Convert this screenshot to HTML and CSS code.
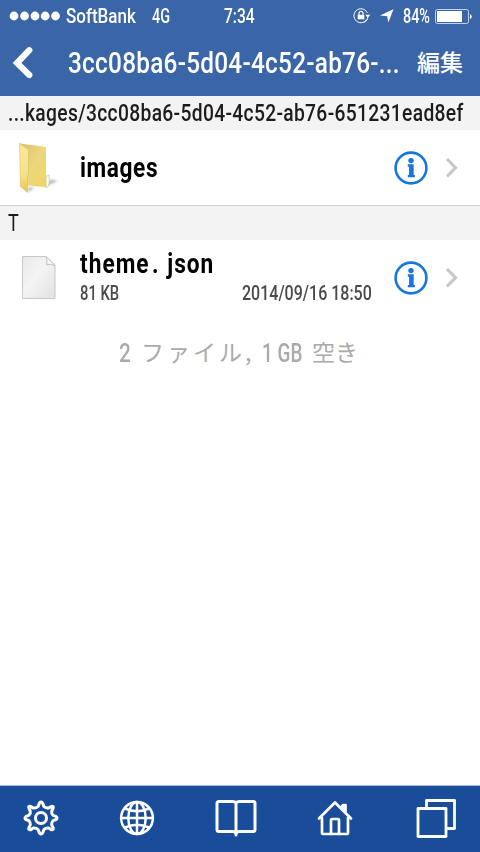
FILE: index.html
```html
<!DOCTYPE html>
<html lang="ja">
<head>
<meta charset="utf-8">
<meta name="viewport" content="width=device-width, initial-scale=1">
<title>ファイル</title>
<link rel="stylesheet" href="styles.css">
</head>
<body>
<div class="app">
  <header class="header">
    <div class="status">
      <div class="carrier">
        <svg class="signal" width="52" height="10" viewBox="0 0 52 10" fill="#fff"><circle cx="5" cy="5" r="4.4"/><circle cx="15.5" cy="5" r="4.4"/><circle cx="26" cy="5" r="4.4"/><circle cx="36.2" cy="5" r="4.4"/><circle cx="46.5" cy="5" r="4.4"/></svg>
        <span class="t carrier-name">SoftBank</span>
        <span class="t network">4G</span>
      </div>
      <span class="t clock">7:34</span>
      <div class="indicators">
        <svg class="lock" width="18" height="16" viewBox="0 0 18 16" fill="none" stroke="#fff"><path d="M14.9 8.5A7 7 0 1 1 14.3 4.8M14.2 11.4A7 7 0 0 1 11 14.3"/><path d="M12.3 6.8h5l-2.5 3z" fill="#fff" stroke="none"/><path d="M6 7V5.3a2 2 0 0 1 4 0V7" stroke-width="1.2"/><path d="M4.7 6.8h6.6v4.5H4.7z" fill="#fff" stroke="none"/></svg>
        <svg class="arrow" width="14" height="14" viewBox="0 0 14 14" fill="#fff"><path d="M13.5.3 8.3 13.6 7.2 7.2 0 6.5z"/></svg>
        <span class="t percent">84%</span>
        <svg class="battery" width="37" height="15" viewBox="0 0 37 15"><rect x=".5" y=".5" width="33" height="14" rx="2" fill="none" stroke="#c4d3eb"/><path d="M2 2h25v11H2z" fill="#fff"/><path d="M35 5q1.7.5 1.7 2.5T35 10z" fill="#fff"/></svg>
      </div>
    </div>
    <div class="nav">
      <svg class="back" width="22" height="34" viewBox="0 0 22 34" fill="none" stroke="#fff" stroke-width="6.2"><path d="M17.300 4.200 5 17l12.300 12" stroke-linecap="round"/></svg>
      <h1 class="t title">3cc08ba6-5d04-4c52-ab76-...</h1>
      <span class="edit">編集</span>
    </div>
  </header>

  <main class="files">
    <div class="section"><span class="t path">...kages/3cc08ba6-5d04-4c52-ab76-651231ead8ef</span></div>
    <div class="row row-folder">
      <svg class="thumb" width="64" height="60" viewBox="0 0 64 60">
        <defs>
          <linearGradient id="fb" x1="0" y1="0" x2="1" y2="1"><stop offset="0" stop-color="#d9c06a"/><stop offset=".5" stop-color="#edd77e"/><stop offset="1" stop-color="#f0d562"/></linearGradient>
          <linearGradient id="ff" x1="0" y1="0" x2="0" y2="1"><stop offset="0" stop-color="#f7e89f"/><stop offset=".65" stop-color="#f6e285"/><stop offset="1" stop-color="#e7c348"/></linearGradient>
          <filter id="soft" x="-30%" y="-50%" width="160%" height="200%"><feGaussianBlur stdDeviation="1.200"/></filter>
        </defs>
        <path d="M44 49 57 43.500 54 41.500 44 43z M28 54l7-4.500h-7z" fill="#b9bdc2" filter="url(#soft)"/>
        <path d="M20 5.500 46 9V49.300L28 47.500z" fill="url(#fb)"/>
        <path d="M46 38.500 49.200 37V45l-1.300 4L46 49.500z" fill="#fcfcf5" stroke="#d4c984" stroke-width=".7"/>
        <path d="M19.500 5.500 28.500 11.500V36.500l-1 1V54.500L20.500 48.500z" fill="url(#ff)" stroke="#d8bf61" stroke-width=".6"/>
      </svg>
      <div class="meta"><span class="t name">images</span></div>
      <svg class="info" width="34" height="34" viewBox="0 0 34 34" fill="#1676e0"><circle cx="17" cy="17" r="15.4" fill="none" stroke="#1676e0" stroke-width="2.6"/><circle cx="17" cy="9.6" r="2.7"/><path d="M13.8 13.3h5.9v10.700h1.2v2.300h-7.1v-2.300h1.300v-8.300h-1.300z"/></svg>
      <svg class="chevron" width="14" height="22" viewBox="0 0 14 22" fill="none" stroke="#c7c7cc" stroke-width="3.2"><path d="m2 2 8.5 8.7L2 19.5"/></svg>
    </div>
    <div class="section section-letter"><span class="t letter">T</span></div>
    <div class="row row-file">
      <svg class="thumb" width="64" height="60" viewBox="0 0 64 60">
        <defs><linearGradient id="pg" x1="0" y1="0" x2="1" y2="1"><stop offset="0" stop-color="#e9e9e9"/><stop offset=".45" stop-color="#f4f4f4"/><stop offset="1" stop-color="#e1e1e1"/></linearGradient></defs>
        <path d="M22.5 8.5H46l9 9V50.500H22.500z" fill="url(#pg)" stroke="#c8c8c8"/>
        <path d="M46 8.500q2 4.500.5 8.300Q50 15.500 55 17.500z" fill="#fafafa" stroke="#bbb" stroke-width=".9"/>
      </svg>
      <div class="meta">
        <span class="t name name-json">theme<span class="dot">.</span>json</span>
        <div class="details"><span class="t size">81 KB</span><span class="t date">2014/09/16 18:50</span></div>
      </div>
      <svg class="info" width="34" height="34" viewBox="0 0 34 34" fill="#1676e0"><circle cx="17" cy="17" r="15.4" fill="none" stroke="#1676e0" stroke-width="2.6"/><circle cx="17" cy="9.6" r="2.7"/><path d="M13.8 13.3h5.9v10.700h1.2v2.300h-7.1v-2.300h1.300v-8.300h-1.300z"/></svg>
      <svg class="chevron" width="14" height="22" viewBox="0 0 14 22" fill="none" stroke="#c7c7cc" stroke-width="3.2"><path d="m2 2 8.5 8.7L2 19.5"/></svg>
    </div>
    <p class="summary"><span class="t count">2</span><span class="jp files-label">ファイル,</span><span class="t free">1 GB</span><span class="jp free-label">空き</span></p>
  </main>

  <footer class="toolbar">
    <svg width="36" height="36" viewBox="0 0 36 36" fill="none" stroke="#fff" stroke-width="3" stroke-linejoin="round"><path d="M15 6.500C16 5.500 15.700 2 18 2s2 3.500 3 4.500 3 1.800 4.500 1.500 3.200-2.500 4.500-1.500-1 3.200-1.300 4.800.3 3 1.300 3.900S34 15.700 34 18s-3 1.700-4 2.800-1.600 2.300-1.300 3.900 2.600 3.500 1.300 4.800-3-1.200-4.500-1.500-3.500.5-4.500 1.500S20.300 34 18 34s-2-3.500-3-4.500-3-1.800-4.500-1.500-3.200 2.800-4.500 1.500 1-3.200 1.300-4.800-.3-2.800-1.300-3.900S2 20.300 2 18s3-1.900 4-2.800 1.600-2.300 1.300-3.900S4.700 7.500 6 6.500s3 1.200 4.500 1.500S14 7.500 15 6.500z"/><circle cx="18" cy="18" r="5.500"/></svg>
    <svg width="36" height="36" viewBox="0 0 36 36" fill="none" stroke="#fff" stroke-width="2.500"><circle cx="18" cy="18" r="15.900"/><path d="M18 2v32M2 18h32M6 8.500Q18 14 30 8.500M6 27.500Q18 22 30 27.500"/><ellipse cx="18" cy="18" rx="8.700" ry="16"/></svg>
    <svg class="book" width="42" height="38" viewBox="0 0 42 38" fill="none" stroke="#fff" stroke-width="3" stroke-linejoin="round" stroke-linecap="round"><path d="M21 4Q20 2.500 17.500 2.500H4Q2 2.500 2 4.500V30.500Q2 32.500 4 32.500H17.500Q20 32.500 21 34.500 22 32.500 24.500 32.500H38Q40 32.500 40 30.500V4.500Q40 2.500 38 2.500H24.500Q22 2.500 21 4V36"/></svg>
    <svg width="36" height="36" viewBox="0 0 36 36" fill="none" stroke="#fff" stroke-width="2.700" stroke-linejoin="round" stroke-linecap="round"><path d="M5 18v14.500q0 1.500 1.500 1.500h23q1.500 0 1.500-1.500V18M2 18.500 18 2.500l16 16"/><path d="M25 6.500 26 5h2.500v6.500z" fill="#fff"/><path d="M14 33.500V20q0-1 1-1h6q1 0 1 1v13.500"/></svg>
    <svg class="tabs" width="40" height="40" viewBox="0 0 40 40" fill="none" stroke="#fff" stroke-width="2.800" stroke-linejoin="round"><path d="M10.500 9V2.500h28v28h-7.500"/><path d="M2 10.500h28v28H2z"/></svg>
  </footer>
</div>
</body>
</html>
```
FILE: styles.css
```css
* { box-sizing: border-box; }
body { margin: 0; background: #fff; font-family: "Roboto", "Noto Sans CJK JP", sans-serif; }
.app { display: flex; flex-direction: column; width: 480px; height: 852px; overflow: hidden; background: #fff; }
.t { display: block; flex: none; white-space: pre; transform-origin: left center; }

.header { flex: none; height: 96px; background: #3a66a8; color: #fff; }
.status { display: grid; grid-template-columns: 224px 129px 1fr; align-items: center; height: 32px; }
.carrier { display: flex; align-items: center; padding-left: 9px; }
.carrier-name { width: 86px; margin-left: 5px; font-size: 20px; font-weight: 500; transform: scaleX(.85); }
.network { font-size: 20px; font-weight: 500; transform: scaleX(.72); }
.clock { font-size: 20px; font-weight: 500; transform: scaleX(.78); }
.indicators { display: flex; align-items: center; }
.arrow { margin-left: 9px; }
.percent { width: 31px; margin-left: 9px; font-size: 20px; font-weight: 500; transform: scaleX(.72); }
.battery { margin-left: 1px; }
.nav { display: flex; align-items: center; height: 62px; padding-left: 12px; }
.title { width: 349px; margin: 0 0 0 34px; font-size: 29px; font-weight: 500; letter-spacing: .3px; transform: scaleX(.84); }
.edit { font: 500 23px/32px "Noto Sans CJK JP", sans-serif; white-space: nowrap; margin-top: -5px; }

.section { display: flex; align-items: center; height: 34px; padding-left: 8px; background: #f3f3f3; color: #1c1c1c; }
.path { font-size: 24px; font-weight: 500; letter-spacing: .4px; transform: scaleX(.802); }
.row { display: flex; align-items: center; height: 75px; background: #fff; }
.row-folder { height: 76px; border-bottom: 1px solid #d0d0d0; }
.letter { font-size: 24px; transform: scaleX(.75); }
.thumb { flex: none; margin-right: 16px; }
.meta { width: 314px; color: #000; }
.name { font-size: 27px; line-height: 32px; font-weight: 700; letter-spacing: .7px; transform: scaleX(.84); }
.name-json { letter-spacing: 1.200px; }
.dot { margin: 0 9px 0 3px; }
.details { display: flex; color: #4a4a4a; }
.size { width: 162px; font-size: 20px; line-height: 27px; font-weight: 500; transform: scaleX(.74); }
.date { font-size: 20px; line-height: 27px; font-weight: 500; transform: scaleX(.8); }
.info { flex: none; }
.chevron { flex: none; margin-left: 17px; }
.summary { display: flex; align-items: center; height: 76px; margin: 0; padding-left: 119px; color: #aaa; }
.count { width: 22px; font-size: 26px; font-weight: 500; transform: scaleX(.8); }
.jp { font: 400 23px/32px "Noto Sans CJK JP", sans-serif; white-space: nowrap; margin-top: -4px; }
.files-label { width: 121px; letter-spacing: 3px; }
.free { width: 50px; font-size: 25px; font-weight: 500; transform: scaleX(.76); }

.toolbar { display: grid; grid-template-columns: 81px 112px 85px 114px 88px; align-items: center; justify-items: center; height: 67px; padding-bottom: 2px; margin-top: auto; border-top: 1px solid #a9bcd9; background: #1a4d99; }
```
